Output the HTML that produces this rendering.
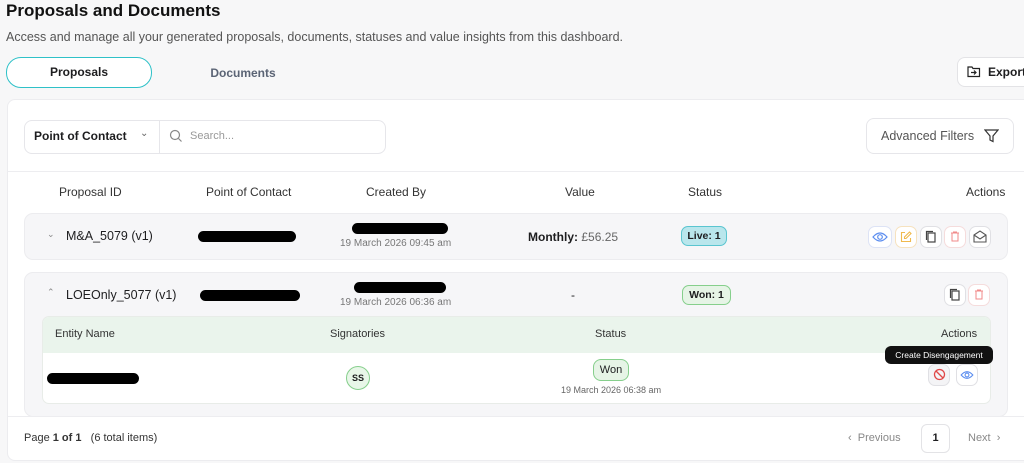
<!DOCTYPE html>
<html><head><style>
*{box-sizing:border-box;margin:0;padding:0}
body{width:1024px;height:463px;overflow:hidden;background:#f7f7f8;font-family:"Liberation Sans",sans-serif;color:#1d1d1f;position:relative}
.a{position:absolute}
.b{font-weight:bold}
.red{background:#000;border-radius:6px;height:11px}
.ib{position:absolute;width:22px;height:22px;border:1px solid #e0e0e4;border-radius:7px;background:#fff}
.hd{font-size:12px;color:#333}
</style></head><body>
<div class="a b" style="left:6px;top:1px;font-size:17px;color:#111">Proposals and Documents</div>
<div class="a" style="left:6px;top:30px;font-size:12.5px;color:#555">Access and manage all your generated proposals, documents, statuses and value insights from this dashboard.</div>
<div class="a b" style="left:6px;top:57px;width:146px;height:31px;border:1.5px solid #2fc1c8;border-radius:15px;background:#fff;font-size:12px;text-align:center;line-height:29px">Proposals</div>
<div class="a b" style="left:190px;top:58px;width:106px;height:30px;font-size:12px;text-align:center;line-height:30px;color:#5b6475">Documents</div>
<div class="a b" style="left:957px;top:57px;width:80px;height:30px;border:1px solid #e3e3e6;border-radius:8px;background:#fff;font-size:12px;line-height:28px;padding-left:30px">Export</div>
<svg class="a" style="left:967px;top:65px" width="14" height="13" viewBox="0 0 14 13"><path d="M1 2h4l1 1.5h6.5v8H1z" fill="none" stroke="#222" stroke-width="1.2"/><path d="M4 7.5h5M7 5.5l2 2-2 2" fill="none" stroke="#222" stroke-width="1.2"/></svg>

<div class="a" style="left:7px;top:99px;width:1030px;height:362px;background:#fff;border:1px solid #ececef;border-radius:8px"></div>
<div class="a" style="left:24px;top:120px;width:362px;height:34px;border:1px solid #e6e6ea;border-radius:8px"></div>
<div class="a" style="left:159px;top:121px;width:1px;height:32px;background:#e6e6ea"></div>
<div class="a b" style="left:34px;top:129px;font-size:12px">Point of Contact</div>
<div class="a" style="left:140px;top:128px;font-size:10px;color:#666">&#8964;</div>
<svg class="a" style="left:169px;top:129px" width="14" height="14" viewBox="0 0 14 14"><circle cx="6" cy="6" r="4.5" fill="none" stroke="#888" stroke-width="1.2"/><path d="M9.5 9.5l3 3" stroke="#888" stroke-width="1.2"/></svg>
<div class="a" style="left:190px;top:130px;font-size:11px;color:#999">Search...</div>
<div class="a" style="left:866px;top:118px;width:148px;height:36px;border:1px solid #e6e6ea;border-radius:8px;font-size:12.5px;color:#555;line-height:34px;padding-left:14px">Advanced Filters</div>
<svg class="a" style="left:984px;top:129px" width="15" height="14" viewBox="0 0 15 14"><path d="M1 1h13L9 7v5.5L6 11V7z" fill="none" stroke="#333" stroke-width="1.2"/></svg>
<div class="a" style="left:8px;top:171px;width:1028px;height:1px;background:#ededf0"></div>

<div class="a hd" style="left:59px;top:185px">Proposal ID</div>
<div class="a hd" style="left:206px;top:185px">Point of Contact</div>
<div class="a hd" style="left:366px;top:185px">Created By</div>
<div class="a hd" style="left:565px;top:185px">Value</div>
<div class="a hd" style="left:688px;top:185px">Status</div>
<div class="a hd" style="left:966px;top:185px">Actions</div>

<div class="a" style="left:24px;top:213px;width:984px;height:47px;background:#f6f6f8;border:1px solid #ececef;border-radius:9px"></div>
<div class="a" style="left:47px;top:229px;font-size:9px;color:#888">&#8964;</div>
<div class="a" style="left:66px;top:229px;font-size:12.5px">M&amp;A_5079 (v1)</div>
<div class="a red" style="left:198px;top:231px;width:98px"></div>
<div class="a red" style="left:352px;top:223px;width:96px"></div>
<div class="a" style="left:340px;top:238px;font-size:10px;color:#777">19 March 2026 09:45 am</div>
<div class="a" style="left:528px;top:230px;font-size:12px"><b>Monthly:</b> <span style="color:#666">£56.25</span></div>
<div class="a b" style="left:681px;top:226px;width:46px;height:20px;background:#b9e6ec;border:1px solid #5ac5d0;border-radius:7px;font-size:10.5px;text-align:center;line-height:18px">Live: 1</div>
<div class="ib" style="left:868px;top:226px;width:24px;border-color:#dde3f5"></div>
<svg class="a" style="left:872px;top:231px" width="16" height="12" viewBox="0 0 16 12"><path d="M1 6q7-8 14 0q-7 8-14 0z" fill="none" stroke="#5b8def" stroke-width="1.2"/><circle cx="8" cy="6" r="2.3" fill="none" stroke="#5b8def" stroke-width="1.2"/></svg>
<div class="ib" style="left:895px;top:226px;border-color:#f6e2bf"></div>
<svg class="a" style="left:900px;top:231px" width="12" height="12" viewBox="0 0 12 12"><path d="M5 1.5H1.5v9h9V7" fill="none" stroke="#f0b94d" stroke-width="1.1"/><path d="M9.5 1l1.5 1.5-5 5H4.5V6z" fill="none" stroke="#f0b94d" stroke-width="1.1"/></svg>
<div class="ib" style="left:920px;top:226px"></div>
<svg class="a" style="left:925px;top:230px" width="12" height="14" viewBox="0 0 12 14"><rect x="3" y="3" width="7" height="9" fill="none" stroke="#444" stroke-width="1.2"/><path d="M1.5 10V1.5H8" fill="none" stroke="#444" stroke-width="1.2"/></svg>
<div class="ib" style="left:944px;top:226px;border-color:#f5dcdc"></div>
<svg class="a" style="left:950px;top:231px" width="10" height="11" viewBox="0 0 10 11"><path d="M1 2h8M3.5 2V1h3v1M2 2v8h6V2" fill="none" stroke="#f08a8a" stroke-width="1"/></svg>
<div class="ib" style="left:969px;top:226px"></div>
<svg class="a" style="left:973px;top:230px" width="14" height="13" viewBox="0 0 14 13"><path d="M1 5l6-4 6 4v7H1z M1 5l6 4 6-4" fill="none" stroke="#555" stroke-width="1.1"/></svg>

<div class="a" style="left:24px;top:272px;width:984px;height:145px;background:#f6f6f8;border:1px solid #ececef;border-radius:9px"></div>
<div class="a" style="left:47px;top:287px;font-size:9px;color:#888">&#8963;</div>
<div class="a" style="left:66px;top:288px;font-size:12.5px">LOEOnly_5077 (v1)</div>
<div class="a red" style="left:200px;top:290px;width:100px"></div>
<div class="a red" style="left:354px;top:282px;width:92px"></div>
<div class="a" style="left:340px;top:297px;font-size:10px;color:#777">19 March 2026 06:36 am</div>
<div class="a" style="left:571px;top:288px;font-size:12px">-</div>
<div class="a b" style="left:682px;top:285px;width:49px;height:20px;background:#e6f4e6;border:1px solid #86cf8c;border-radius:7px;font-size:10.5px;text-align:center;line-height:18px">Won: 1</div>
<div class="ib" style="left:944px;top:284px"></div>
<svg class="a" style="left:949px;top:288px" width="12" height="14" viewBox="0 0 12 14"><rect x="3" y="3" width="7" height="9" fill="none" stroke="#444" stroke-width="1.2"/><path d="M1.5 10V1.5H8" fill="none" stroke="#444" stroke-width="1.2"/></svg>
<div class="ib" style="left:968px;top:284px;border-color:#f5dcdc"></div>
<svg class="a" style="left:974px;top:289px" width="10" height="11" viewBox="0 0 10 11"><path d="M1 2h8M3.5 2V1h3v1M2 2v8h6V2" fill="none" stroke="#f08a8a" stroke-width="1"/></svg>

<div class="a" style="left:42px;top:316px;width:949px;height:88px;background:#fff;border:1px solid #e8ece8;border-radius:7px;overflow:hidden">
<div style="height:36px;background:#eaf4ec"></div></div>
<div class="a" style="left:55px;top:328px;font-size:11px;color:#333">Entity Name</div>
<div class="a" style="left:330px;top:328px;font-size:11px;color:#333">Signatories</div>
<div class="a" style="left:595px;top:328px;font-size:11px;color:#333">Status</div>
<div class="a" style="left:941px;top:328px;font-size:11px;color:#333">Actions</div>
<div class="a red" style="left:47px;top:373px;width:92px"></div>
<div class="a b" style="left:346px;top:366px;width:24px;height:24px;border-radius:50%;background:#e8f6e8;border:1px solid #86cf8c;font-size:9px;text-align:center;line-height:22px">SS</div>
<div class="a" style="left:593px;top:359px;width:36px;height:22px;background:#e6f4e6;border:1px solid #86cf8c;border-radius:8px;font-size:11px;text-align:center;line-height:20px">Won</div>
<div class="a" style="left:561px;top:385px;font-size:9px;color:#666">19 March 2026 06:38 am</div>
<div class="a" style="left:885px;top:346px;width:108px;height:18px;background:#111;border-radius:6px;color:#fff;font-size:8.5px;text-align:center;line-height:18px">Create Disengagement</div>
<div class="ib" style="left:928px;top:364px;height:22px;background:#f4f4f6"></div>
<svg class="a" style="left:933px;top:368px" width="13" height="13" viewBox="0 0 13 13"><circle cx="6.5" cy="6.5" r="5" fill="none" stroke="#e04848" stroke-width="1.3"/><path d="M3 3l7 7" stroke="#e04848" stroke-width="1.3"/></svg>
<div class="ib" style="left:956px;top:364px"></div>
<svg class="a" style="left:960px;top:370px" width="14" height="10" viewBox="0 0 16 12"><path d="M1 6q7-8 14 0q-7 8-14 0z" fill="none" stroke="#5b8def" stroke-width="1.3"/><circle cx="8" cy="6" r="2.3" fill="none" stroke="#5b8def" stroke-width="1.3"/></svg>

<div class="a" style="left:8px;top:416px;width:1028px;height:1px;background:#ededf0"></div>
<div class="a" style="left:24px;top:432px;font-size:11px;color:#333">Page <b>1 of 1</b> &nbsp; (6 total items)</div>
<div class="a" style="left:848px;top:432px;font-size:11px;color:#888">&#8249; &nbsp;Previous</div>
<div class="a b" style="left:921px;top:424px;width:29px;height:29px;border:1px solid #e3e3e6;border-radius:6px;font-size:11px;text-align:center;line-height:27px">1</div>
<div class="a" style="left:968px;top:432px;font-size:11px;color:#888">Next &nbsp;&#8250;</div>
</body></html>
